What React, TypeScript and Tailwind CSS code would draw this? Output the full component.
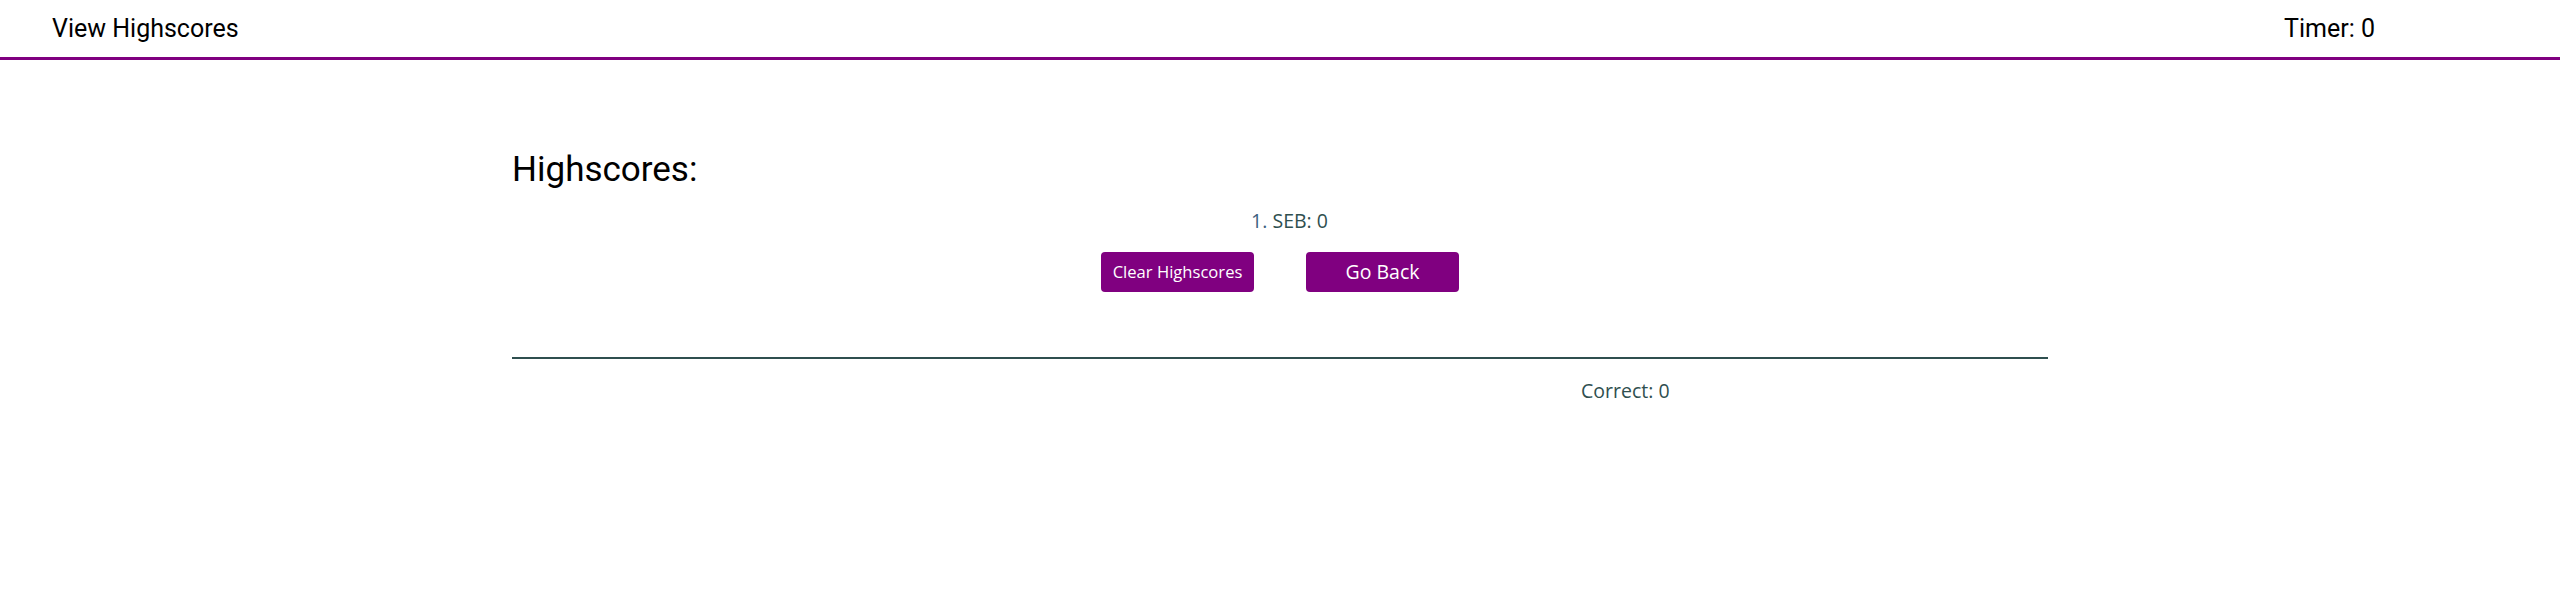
export default function App() {
  return (
    <div className="min-h-[602px] bg-white">
      <header className="flex h-[60px] items-center justify-between border-b-[3px] border-[#800080] pl-[52px] pr-[185px]" style={{ fontFamily: 'Roboto, sans-serif' }}>
        <span className="text-[25px] leading-[29px] text-black">View Highscores</span>
        <span className="text-[25px] leading-[29px] text-black">Timer: 0</span>
      </header>
      <main className="mx-auto w-[1536px]">
        <h1 className="mt-[89px] text-[35px] leading-[41px] text-black" style={{ fontFamily: 'Roboto, sans-serif' }}>Highscores:</h1>
        <ol className="mt-[17px] pl-[19px] text-center text-[19.5px] font-normal leading-[28px] text-[#2f4f4f]" style={{ fontFamily: '"Open Sans", sans-serif' }}>
          <li><span className="text-[#3d6080]">1.</span> SEB: 0</li>
        </ol>
        <div className="mt-[17px] flex justify-center gap-[52px]" style={{ fontFamily: '"Open Sans", sans-serif' }}>
          <button className="h-[40px] w-[153px] rounded-[4px] bg-[#800080] text-[16.6px] font-medium text-white">Clear Highscores</button>
          <button className="h-[40px] w-[153px] rounded-[4px] bg-[#800080] text-[19.5px] font-medium text-white">Go Back</button>
        </div>
        <div className="mt-[65px] h-[2px] bg-[#2f4f4f]" />
        <p className="mt-[18px] pl-[1069px] text-[19.5px] font-normal leading-[28px] text-[#2f4f4f]" style={{ fontFamily: '"Open Sans", sans-serif' }}>Correct: 0</p>
      </main>
    </div>
  );
}
